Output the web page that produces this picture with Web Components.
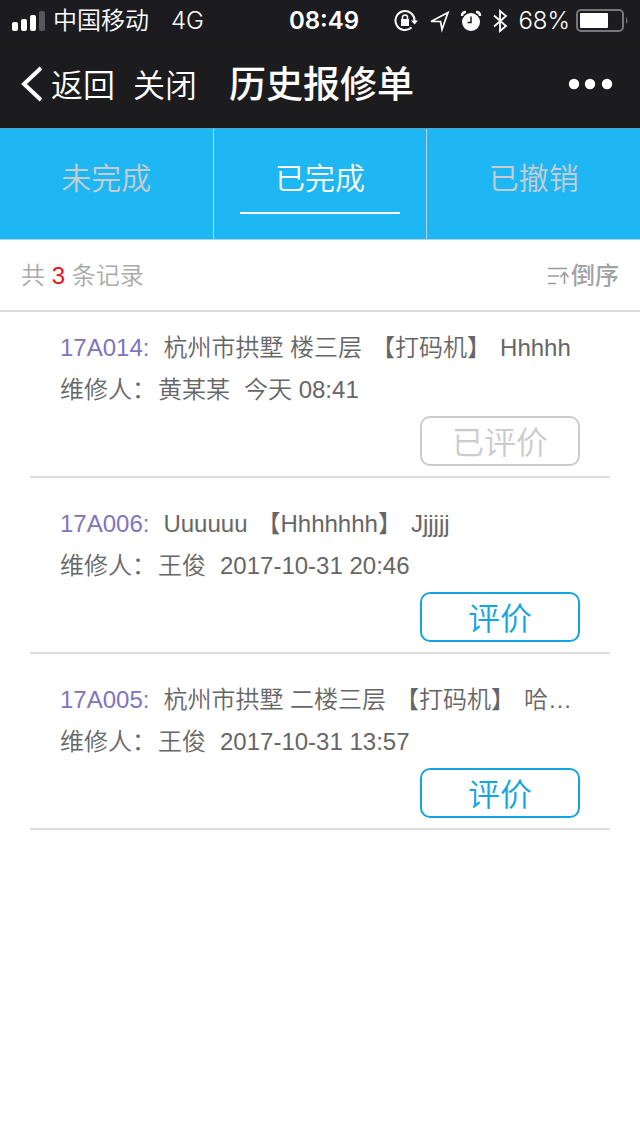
<!DOCTYPE html>
<html lang="zh-CN">
<head>
<meta charset="utf-8">
<meta name="viewport" content="width=device-width, initial-scale=1">
<title>历史报修单</title>
<style>
  body { margin: 0; background: #fff; color: #666; font: 350 24px/42px "Liberation Sans", "Noto Sans CJK SC", sans-serif; }
</style>
</head>
<body>
<repair-app></repair-app>
<script>
const define = (name, html, setup) => {
  const template = document.createElement('template');
  template.innerHTML = html;
  customElements.define(name, class extends HTMLElement {
    constructor() {
      super();
      this.attachShadow({ mode: 'open' }).append(template.content.cloneNode(true));
    }
    connectedCallback() { if (setup) setup(this, this.shadowRoot); }
  });
};

define('status-bar', `
<style>
  :host { display: grid; grid-template-columns: 1fr auto 1fr; align-items: center; padding: 2px 10px 0 12px;
    background: #1c1c20; color: #fff; font-family: Inter, "Noto Sans CJK SC", sans-serif; font-size: 24px; line-height: 38px; }
  svg { display: block; flex: none; }
  .left, .right { display: flex; align-items: center; }
  .left { gap: 8px; }
  .net { margin-left: 14px; }
  .time { padding-left: 6px; font-weight: 600; }
  .right { justify-content: flex-end; gap: 8px; }
  .battery { margin-left: -2px; }
</style>
<div class="left">
  <svg width="33" height="20" viewBox="0 0 33 20" fill="#fff"><rect y="11" width="6" height="9" rx="2"/><rect x="9" y="8" width="6" height="12" rx="2"/><rect x="18" y="4" width="6" height="16" rx="2"/><rect x="27" width="6" height="20" rx="2" fill="#58585c"/></svg>
  <span>中国移动</span><span class="net">4G</span>
</div>
<div class="time">08:49</div>
<div class="right">
  <svg width="24" height="24" viewBox="0 0 24 24" fill="none" stroke="#fff" stroke-width="2"><path d="M20.500 12A9.500 9.500 0 1 0 17.500 18.500M20.500 12A9.500 9.500 0 0 0 18 5"/><path d="M17 11.500h7l-3.500 4z" fill="#fff" stroke="none"/><rect x="7" y="10" width="8" height="7" fill="#fff" stroke="none"/><path d="M8.500 11V8.500a2.500 2.500 0 0 1 5 0V11" stroke-width="1.500"/></svg>
  <svg width="26" height="24" viewBox="0 0 26 24" fill="none" stroke="#fff" stroke-width="1.700"><path d="M5 12.500L22 3.500L16 20.500L14.500 12.500Z"/></svg>
  <svg width="22" height="22" viewBox="0 0 22 22"><circle cx="11" cy="12" r="9" fill="#fff"/><path d="M11 6.500V12.500H7.500" fill="none" stroke="#1c1c20" stroke-width="1.500"/><path d="M2 6Q2 2 6 2M16 2Q20 2 20 6" fill="none" stroke="#fff" stroke-width="2.500"/></svg>
  <svg width="20" height="24" viewBox="0 0 20 24" fill="none" stroke="#fff" stroke-width="1.800"><path d="M4 6.500L16 17L10 22V2L16 7L4 17.500"/></svg>
  <span>68%</span>
  <svg class="battery" width="54" height="24" viewBox="0 0 54 24"><rect x="1" y="1" width="46" height="21" rx="4" fill="none" stroke="#77777b" stroke-width="2"/><rect x="4" y="4" width="28" height="15" rx="1" fill="#fff"/><path d="M50 8Q53 11.500 50 15Z" fill="#77777b"/></svg>
</div>`);

define('nav-bar', `
<style>
  :host { display: flex; align-items: center; padding: 24px 27px 20px 20px; background: #1c1c1e; color: #fff; }
  button { all: unset; display: flex; align-items: center; font-size: 32px; line-height: 44px; cursor: pointer; }
  svg { display: block; margin-top: -4px; }
  .back { gap: 7px; }
  .close { margin-left: 18px; }
  h1 { flex: 1; margin: 0 0 0 32px; font-size: 37px; line-height: 44px; font-weight: 500; }
</style>
<button class="back"><svg width="24" height="36" viewBox="0 0 24 36" fill="none" stroke="#fff" stroke-width="4"><path d="M21 2L4 18L21 34"/></svg>返回</button>
<button class="close">关闭</button>
<h1><slot></slot></h1>
<button aria-label="更多"><svg width="46" height="12" viewBox="0 0 46 12" fill="#fff"><circle cx="7" cy="6" r="5.200"/><circle cx="23" cy="6" r="5.200"/><circle cx="40" cy="6" r="5.200"/></svg></button>`);

define('tab-item', `
<style>
  :host { display: block; flex: 1; box-sizing: border-box; border-right: 1px solid #b9d3e0; }
  :host(:last-child) { border-right: 0; }
  button { all: unset; display: flex; flex-direction: column; align-items: center; width: 100%; padding: 28px 0 25px;
    color: #c8ccce; font-size: 30px; line-height: 44px; cursor: pointer; }
  button::after { content: ""; width: 75%; height: 2px; margin-top: 11px; }
  :host([selected]) button { color: #fff; }
  :host([selected]) button::after { background: #fff; }
</style>
<button role="tab"><slot></slot></button>`, (host, root) => {
  root.querySelector('button').setAttribute('aria-selected', host.hasAttribute('selected'));
});

define('tab-bar', `
<style>
  :host { display: flex; background: #1eb7f3; border-top: 1px solid #4fa9cd; border-bottom: 1px solid #a9d5e8; }
</style>
<slot></slot>`);

define('record-summary', `
<style>
  :host { display: flex; align-items: center; justify-content: space-between; padding: 15px 21px 13px; border-bottom: 2px solid #dcdcdc; color: #aaa; }
  b { color: #f01020; font-weight: 400; }
  button { all: unset; display: flex; align-items: center; color: #a3a3a3; font-weight: 500; cursor: pointer; }
  svg { display: block; }
</style>
<div>共 <b><slot></slot></b> 条记录</div>
<button><svg width="23" height="20" viewBox="0 0 23 20" fill="none" stroke="#999" stroke-width="1.500"><path d="M0 2.500H19M0 10H11M0 17.500H8M16.500 18V7M12.500 11L16.500 6.500L20.500 11"/></svg>倒序</button>`);

define('repair-item', `
<style>
  :host { display: block; padding: 15px 30px 10px; border-bottom: 2px solid #dcdcdc; }
  .line { display: flex; white-space: nowrap; gap: 14px; }
  a { color: #8074bd; text-decoration: none; }
  .detail { display: flex; gap: 9px; min-width: 0; }
  .person { display: flex; gap: 2px; }
  button { display: block; box-sizing: border-box; width: 160px; height: 50px; margin: 5px 0 0 auto; padding: 4px 0 0;
    border: 2px solid #12a5e0; border-radius: 10px; background: #fff; color: #12a5e0;
    font: inherit; font-size: 32px; line-height: 42px; cursor: pointer; }
  button:disabled { border-color: #ccc; color: #ccc; cursor: default; }
</style>
<div class="line"><a href="#"></a><div class="detail"><slot></slot></div></div>
<div class="line"><div class="person"><span>维修人：</span><slot name="person"></slot></div><slot name="time"></slot></div>
<button></button>`, (host, root) => {
  root.querySelector('a').textContent = host.getAttribute('code') + ':';
  const button = root.querySelector('button');
  button.disabled = host.hasAttribute('rated');
  button.textContent = button.disabled ? '已评价' : '评价';
});

define('repair-list', `
<style>
  :host { display: flex; flex-direction: column; gap: 10px; padding: 0 30px; }
</style>
<slot></slot>`);

define('repair-app', `
<style>:host { display: block; }</style>
<status-bar></status-bar>
<nav-bar>历史报修单</nav-bar>
<tab-bar role="tablist">
  <tab-item>未完成</tab-item>
  <tab-item selected>已完成</tab-item>
  <tab-item>已撤销</tab-item>
</tab-bar>
<record-summary>3</record-summary>
<repair-list>
  <repair-item code="17A014" rated>
    <span>杭州市拱墅 楼三层</span><span>【打码机】</span><span>Hhhhh</span>
    <span slot="person">黄某某</span><span slot="time">今天 08:41</span>
  </repair-item>
  <repair-item code="17A006">
    <span>Uuuuuu</span><span>【Hhhhhhh】</span><span>Jjjjjj</span>
    <span slot="person">王俊</span><span slot="time">2017-10-31 20:46</span>
  </repair-item>
  <repair-item code="17A005">
    <span>杭州市拱墅 二楼三层</span><span>【打码机】</span><span>哈…</span>
    <span slot="person">王俊</span><span slot="time">2017-10-31 13:57</span>
  </repair-item>
</repair-list>`);
</script>
</body>
</html>
